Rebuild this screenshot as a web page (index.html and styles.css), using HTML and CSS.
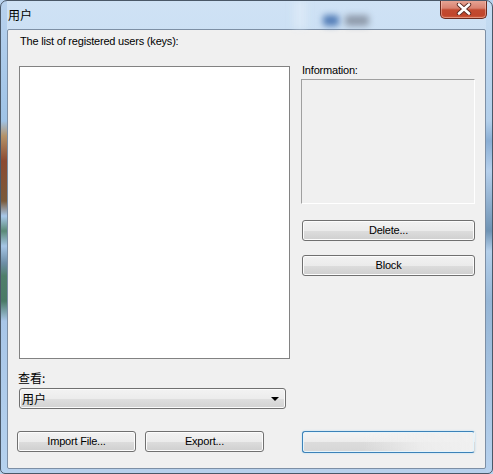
FILE: index.html
```html
<!DOCTYPE html>
<html>
<head>
<meta charset="utf-8">
<link rel="stylesheet" href="styles.css">
</head>
<body>
<div class="window">
  <div class="titlebar">
    <span class="glass-band"></span>
    <span class="glass-blob blue"></span>
    <span class="glass-blob gray"></span>
    <span class="title">用户</span>
    <div class="close">
      <svg width="18" height="12" viewBox="0 0 18 12"><path d="M4 1.5 L14 10.5 M14 1.5 L4 10.5" stroke="#5a2a22" stroke-width="4.4" stroke-linecap="round"/><path d="M4 1.5 L14 10.5 M14 1.5 L4 10.5" stroke="#ffffff" stroke-width="2.6" stroke-linecap="round"/></svg>
    </div>
  </div>
  <div class="client">
    <div class="caption">The list of registered users (keys):</div>
    <div class="main">
      <div class="left-col">
        <div class="listbox"></div>
        <div class="view-label">查看:</div>
        <div class="combo"><span class="combo-text">用户</span><span class="arrow"></span></div>
      </div>
      <div class="right-col">
        <div class="info-label">Information:</div>
        <div class="info-box"></div>
        <div class="btn wide delete">Delete...</div>
        <div class="btn wide block">Block</div>
      </div>
    </div>
    <div class="bottom">
      <div class="btn small import">Import File...</div>
      <div class="btn small">Export...</div>
      <div class="btn default-btn"></div>
    </div>
  </div>
</div>
</body>
</html>
```
FILE: styles.css
```css
html, body {
  margin: 0;
  padding: 0;
  background: #b9d3ee;
}

body {
  font-family: "Liberation Sans", "DejaVu Sans", "Noto Sans CJK SC", sans-serif;
  font-size: 11px;
  letter-spacing: -0.2px;
  color: #000;
}

.window {
  width: 493px;
  height: 474px;
  box-sizing: border-box;
  border: 1px solid #4a5868;
  border-radius: 7px 7px 5px 5px;
  overflow: hidden;
  display: flex;
  flex-direction: column;
  background:
    linear-gradient(to bottom,
      #b8d2ee 0px, #9fc3e6 120px, #b49268 135px, #8c4a32 160px, #7a5a3a 200px,
      #a8c8ea 215px, #5b8a76 230px, #a6c6e6 245px, #6e8ea6 262px, #4f7e6a 275px,
      #4a7a66 300px, #a8c6e8 320px, #b6d2ee 474px) left top / 6px 100% no-repeat,
    linear-gradient(to bottom,
      #c6ddf3 0px, #b3cfea 120px, #8aaed4 140px, #b6d0ec 170px, #6f93b4 230px,
      #b4cfea 250px, #96b6d6 300px, #b8d2ee 474px) right top / 6px 100% no-repeat,
    linear-gradient(to bottom, #cfe2f5 0%, #bdd6f0 40%, #b6d0ec 100%);
}

.titlebar {
  height: 28px;
  flex: none;
  display: flex;
  justify-content: space-between;
  align-items: flex-start;
  position: relative;
}

.glass-band {
  position: absolute;
  left: 292px;
  top: 0;
  width: 14px;
  height: 28px;
  background: rgba(230, 240, 250, 0.5);
  filter: blur(3px);
}

.glass-blob {
  position: absolute;
  top: 14px;
  height: 11px;
  border-radius: 3px;
  filter: blur(3px);
}

.glass-blob.blue {
  left: 322px;
  width: 16px;
  background: #557fb8;
}

.glass-blob.gray {
  left: 344px;
  width: 24px;
  background: #909cac;
}

.title {
  position: relative;
  margin: 7px 0 0 7px;
  font-family: "Noto Sans CJK SC", sans-serif;
  font-size: 12px;
  line-height: 14px;
  letter-spacing: 0;
  color: #000;
}

.close {
  position: relative;
  width: 47px;
  height: 19px;
  margin: -1px 5px 0 0;
  box-sizing: border-box;
  border: 1px solid #6a2a1e;
  border-top: none;
  border-radius: 0 0 5px 5px;
  background: linear-gradient(to bottom, #e8a898 0%, #d98270 45%, #c24a30 55%, #c0462c 85%, #d06040 100%);
  box-shadow: inset 0 0 0 1px rgba(255, 210, 200, 0.45);
  display: flex;
  align-items: center;
  justify-content: center;
}

.client {
  flex: 1;
  margin: 0 6px 4px 6px;
  border: 1px solid #7d8fa5;
  border-radius: 2px;
  background: #f0f0f0;
  padding: 5px 10px 0 11px;
}

.caption {
  line-height: 13px;
  margin-left: 1px;
}

.main {
  margin-top: 16px;
  display: grid;
  grid-template-columns: 271px 174px;
  column-gap: 11px;
}

.left-col {
  display: flex;
  flex-direction: column;
}

.listbox {
  margin-top: 2px;
  height: 293px;
  box-sizing: border-box;
  border: 1px solid #828282;
  background: #fff;
}

.view-label {
  margin-top: 12px;
  margin-left: -1px;
  font-family: "Noto Sans CJK SC", sans-serif;
  font-size: 12px;
  line-height: 13px;
  letter-spacing: 0;
}

.combo {
  margin-top: 4px;
  width: 267px;
  height: 21px;
  box-sizing: border-box;
  border: 1px solid #707070;
  border-radius: 3px;
  background: linear-gradient(to bottom, #f3f3f3 0%, #ececec 50%, #dfdfdf 51%, #d2d2d2 100%);
  box-shadow: inset 0 0 0 1px #fafafa;
  display: flex;
  align-items: center;
  justify-content: space-between;
  padding: 0 6px 0 2px;
}

.combo-text {
  font-family: "Noto Sans CJK SC", sans-serif;
  font-size: 12px;
  line-height: 14px;
  letter-spacing: 0;
}

.arrow {
  width: 0;
  height: 0;
  border-left: 4px solid transparent;
  border-right: 4px solid transparent;
  border-top: 4px solid #000;
}

.right-col {
  display: flex;
  flex-direction: column;
}

.info-label {
  line-height: 13px;
  margin-left: 1px;
}

.info-box {
  margin-top: 2px;
  height: 125px;
  box-sizing: border-box;
  border-top: 1px solid #a0a0a0;
  border-left: 1px solid #a0a0a0;
  border-right: 1px solid #fff;
  border-bottom: 1px solid #fff;
}

.btn {
  height: 21px;
  box-sizing: border-box;
  border: 1px solid #707070;
  border-radius: 3px;
  background: linear-gradient(to bottom, #f2f2f2 0%, #ebebeb 50%, #dddddd 51%, #cfcfcf 100%);
  box-shadow: inset 0 0 0 1px #fcfcfc;
  display: flex;
  align-items: center;
  justify-content: center;
  line-height: 13px;
}

.wide {
  width: 173px;
  margin-left: 1px;
}

.delete {
  margin-top: 16px;
}

.block {
  margin-top: 14px;
}

.bottom {
  margin-top: 22px;
  display: flex;
  align-items: flex-start;
  gap: 9px;
}

.small {
  width: 119px;
}

.import {
  margin-left: -2px;
}

.default-btn {
  margin-left: auto;
  width: 173px;
  height: 22px;
  border-color: #3c82b8;
  border-right-color: transparent;
  background:
    linear-gradient(to right, rgba(240, 240, 240, 0) 35%, rgba(240, 240, 240, 0.85) 70%, #f0f0f0 100%),
    linear-gradient(to bottom, #f4f4f4 0%, #ececec 50%, #dcdcdc 51%, #d6d6d6 100%);
  box-shadow: inset 0 0 0 1px #e4f4fc, 0 0 2px #a8d8f2;
}
```
